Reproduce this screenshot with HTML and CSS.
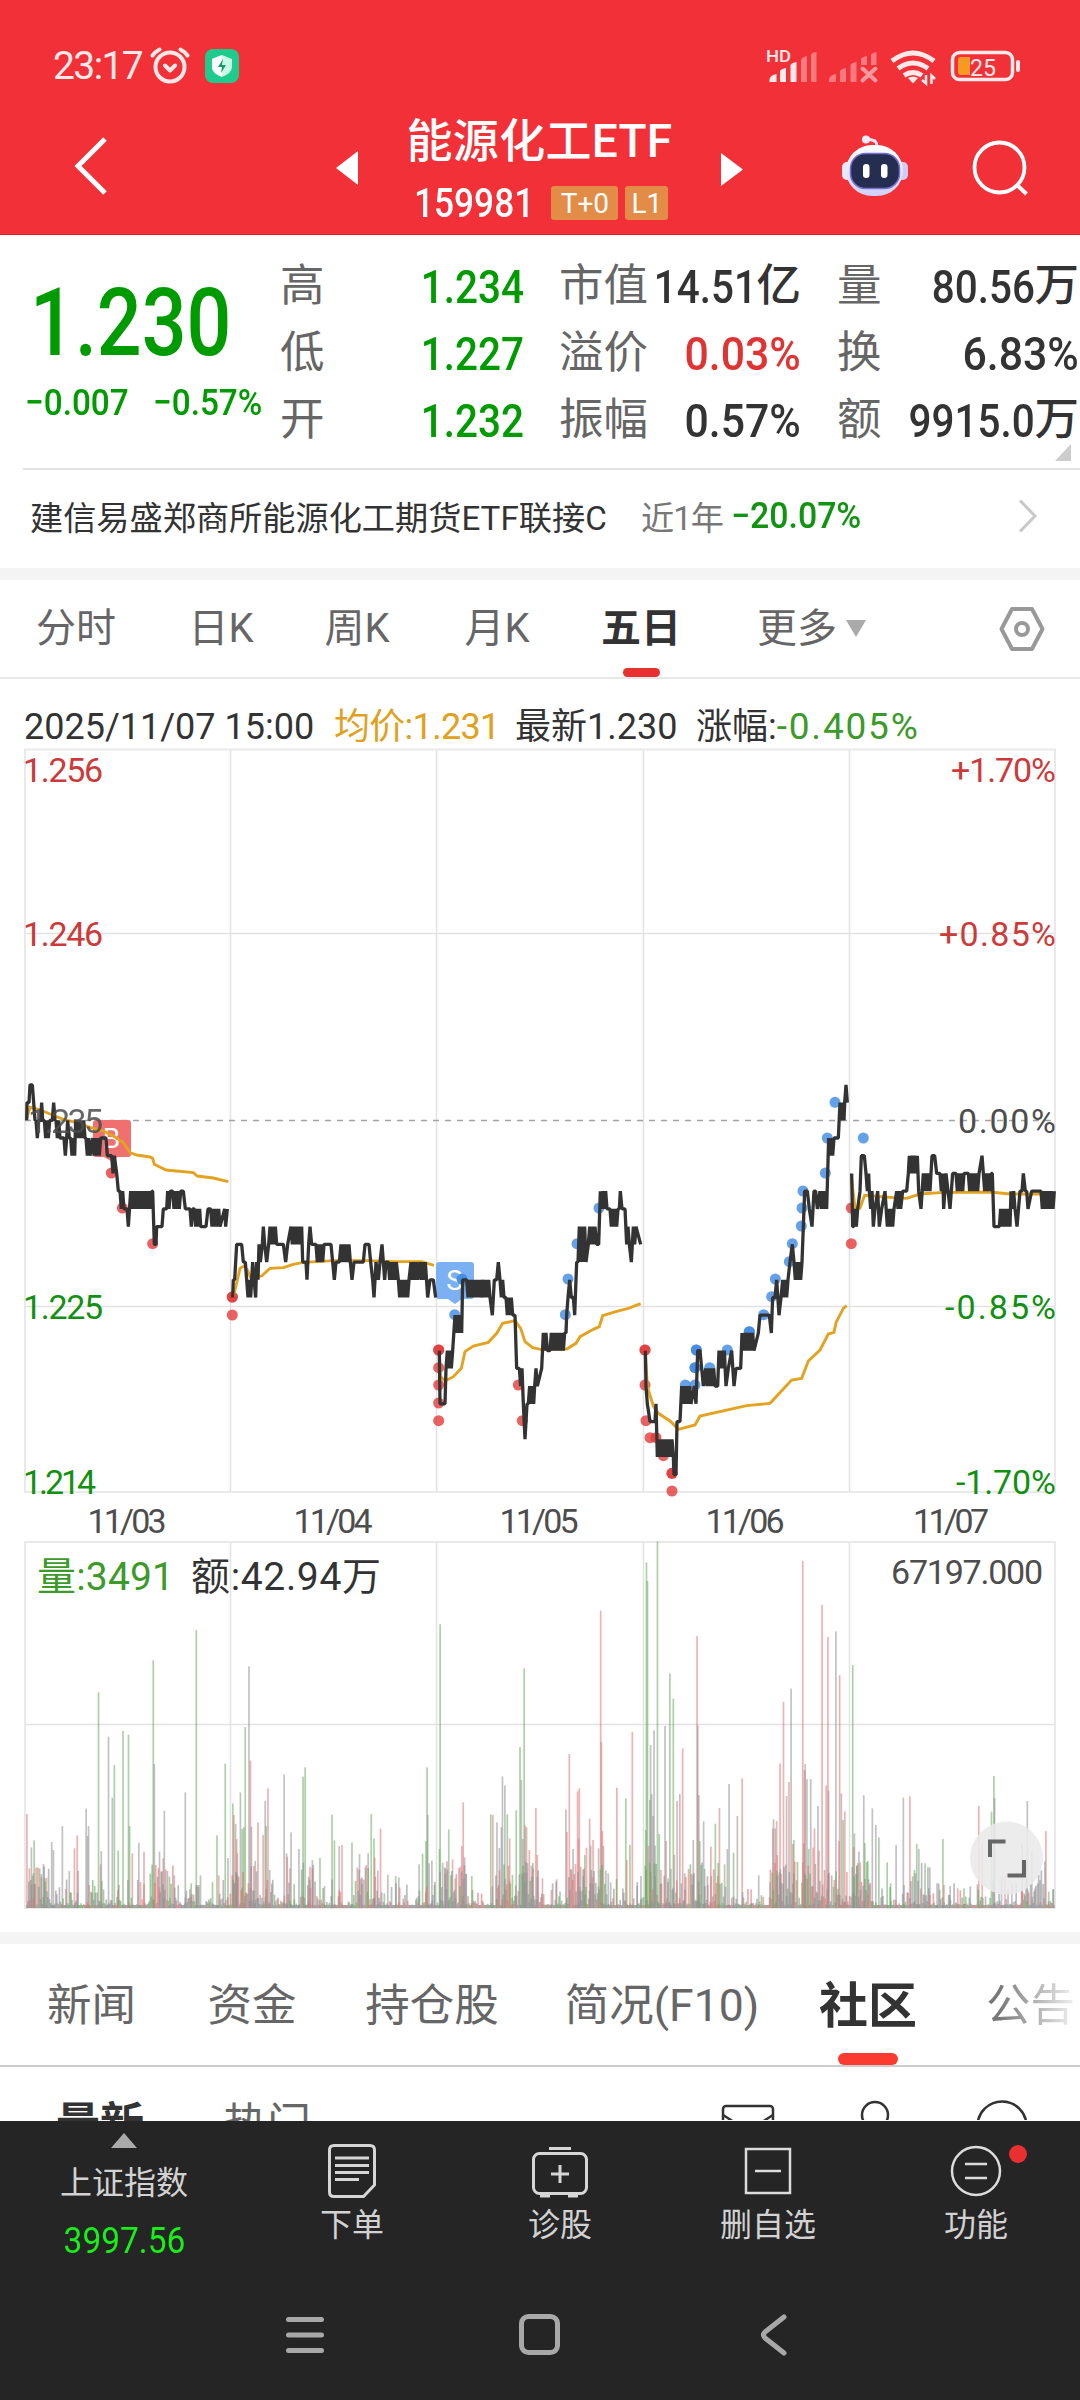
FILE: index.html
```html
<!DOCTYPE html>
<html lang="zh-CN">
<head>
<meta charset="utf-8">
<title>能源化工ETF 159981</title>
<link rel="stylesheet" href="styles.css">
</head>
<body>
<main class="phone">
  <header class="top">
    <div class="status">
      <div class="status-left">
        <span class="clock">23:17</span>
        <svg class="i-alarm" width="40" height="38" viewBox="0 0 40 38" fill="none" stroke="#ffe6e7" stroke-width="4" stroke-linecap="round" stroke-linejoin="round"><circle cx="20" cy="20" r="14.5"/><path d="M15 18.5l5 5 5-5M2.5 8.500Q5 5 9.500 2.500M37.500 8.500Q35 5 30.500 2.500"/></svg>
        <svg class="i-shield" width="34" height="34" viewBox="0 0 34 34"><rect width="34" height="34" rx="8" fill="#1dcb8c"/><path d="M17 6l10 4v8q0 6-10 10Q7 24 7 18v-8z" fill="#c9fae6"/><path d="M17 6v22Q7 24 7 18v-8z" fill="#fff"/><path d="M18 10l-5 8h4l-1 6 5-8h-4z" fill="#179a6c"/></svg>
      </div>
      <svg class="status-right" width="260" height="40" viewBox="765 46 260 40">
        <text class="hd" x="766" y="62" textLength="25" lengthAdjust="spacingAndGlyphs">HD</text>
        <g fill="#ffe9e9"><path d="M769.500 82v-3q1-4 7-5v8zM780 82V71q1-2 6-3v14zM790.500 82V65q1-2 6-3v20z"/></g>
        <g fill="#fff" opacity=".36"><path d="M801 82V60q1-3 6-4v26zM811 82V55q1-3 5.500-3v30zM829 82v-3q1-4 7-5v8zM840 82V71q1-2 6-3v14zM850.500 82V65q1-2 6-3v20zM861 65v-6q1-2 6-3v9zM871 65V55q1-2 5.500-3v13z"/></g>
        <path d="M862.500 68.500l13 12M875.500 68.500l-13 12" stroke="#fff" opacity=".5" stroke-width="4" stroke-linecap="round"/>
        <g fill="none" stroke="#ffe9e9" stroke-width="5"><path d="M892 61q21-16 42 0M898 68.500q15-11 30 0M904 75.500q9-6 18 0"/></g>
        <path d="M908 78q5-3 10 0l-5 5.500z" fill="#ffe9e9"/>
        <path d="M926 75v8.500l-4-3.500M931.500 84v-8.500l3.500 3.500" fill="none" stroke="#ffe9e9" stroke-width="2.500"/>
        <rect x="952.500" y="52.500" width="60" height="27" rx="7" fill="none" stroke="#ffe9e9" stroke-width="3.500"/>
        <path d="M1018 62v8" stroke="#ffe9e9" stroke-width="4" stroke-linecap="round"/>
        <path d="M970 57v18h-9q-3 0-3-3V60q0-3 3-3z" fill="#f59a23"/>
        <text class="bat" x="970" y="75.500" textLength="26" lengthAdjust="spacingAndGlyphs">25</text>
      </svg>
    </div>
    <div class="titlebar">
      <svg width="336" height="135" viewBox="0 100 336 135" fill="none"><path d="M105 139L78 166l27 27" stroke="#fff" stroke-width="5"/></svg>
      <svg width="22" height="135" viewBox="336 100 22 135"><path d="M336 168l22-17v34z" fill="#fff"/></svg>
      <div class="title">
        <div class="name">能源化工ETF</div>
        <div class="code-row"><span class="code din left">159981</span><span class="badge b1">T+0</span><span class="badge b2">L1</span></div>
      </div>
      <svg width="359" height="135" viewBox="721 100 359 135">
        <defs><linearGradient id="rb" x1="0" y1="0" x2="0" y2="1"><stop offset="0" stop-color="#fff"/><stop offset="1" stop-color="#cfd0f5"/></linearGradient></defs>
        <path d="M721 153v33l22-16.500z" fill="#fff"/>
        <path d="M866 139q4 0 9 2 2 2 2 6" fill="none" stroke="#e6e2f5" stroke-width="3"/><circle cx="866" cy="139.500" r="4" fill="#f0eefa"/>
        <rect x="842" y="162" width="11" height="18" rx="5" fill="#eae6f8"/><rect x="897" y="162" width="11" height="18" rx="5" fill="#cfcdf2"/>
        <rect x="846" y="145" width="57" height="51" rx="26" fill="url(#rb)"/>
        <rect x="850.500" y="153.500" width="49" height="35" rx="15" fill="#252d50" stroke="#776fd2" stroke-width="1.500"/>
        <rect x="863" y="164" width="6.500" height="14" rx="3.200" fill="#fff"/><rect x="881" y="164" width="6.500" height="14" rx="3.200" fill="#fff"/>
        <circle cx="999.500" cy="167.500" r="25" fill="none" stroke="#fff" stroke-width="3.800"/><path d="M1017 185l9.500 9" stroke="#fff" stroke-width="4"/>
      </svg>
    </div>
  </header>

  <section class="quote">
    <div class="price">
      <div class="last din left">1.230</div>
      <div class="chg"><span class="din left">−0.007</span><span class="din left">−0.57%</span></div>
    </div>
    <dl class="stats">
      <dt>高</dt><dd class="g"><b class="din">1.234</b></dd><dt class="m">市值</dt><dd><b class="din">14.51</b>亿</dd><dt class="r">量</dt><dd><b class="din">80.56</b>万</dd>
      <dt>低</dt><dd class="g"><b class="din">1.227</b></dd><dt class="m">溢价</dt><dd class="red"><b class="din wide">0.03%</b></dd><dt class="r">换</dt><dd><b class="din wide">6.83%</b></dd>
      <dt>开</dt><dd class="g"><b class="din">1.232</b></dd><dt class="m">振幅</dt><dd><b class="din wide">0.57%</b></dd><dt class="r">额</dt><dd><b class="din">9915.0</b>万</dd>
    </dl>
    <i class="corner"></i>
  </section>

  <section class="fund">
    <span class="fund-name">建信易盛郑商所能源化工期货ETF联接C</span>
    <span class="period">近1年</span>
    <span class="ret din left">−20.07%</span>
    <svg class="chev" width="20" height="34" viewBox="0 0 20 34" fill="none" stroke="#c8c8c8" stroke-width="3"><path d="M2 1.500l15 15.500L2 32.500"/></svg>
  </section>

  <nav class="periods">
    <span>分时</span><span>日K</span><span>周K</span><span>月K</span><span class="on">五日</span><span class="more">更多<i></i></span>
    <svg width="48" height="46" viewBox="0 0 48 46" fill="none" stroke="#999" stroke-width="4"><path d="M14 3h20l10.500 20L34 43H14L3.500 23z" stroke-linejoin="round"/><circle cx="24" cy="23" r="6"/></svg>
  </nav>

  <section class="info"><span class="t1">2025/11/07 15:00</span><span class="avg">均价:1.231</span><span class="now">最新1.230</span><span class="pct">涨幅:<b>-0.405%</b></span></section>

  <svg class="chart" width="1080" height="1187" viewBox="0 745 1080 1187">
    <g fill="none" stroke="#e2e2e2" stroke-width="1.500">
      <path d="M230.500 749V1492M436.500 749V1492M643.500 749V1492M849.500 749V1492M25 933.500H1055M25 1306.500H1055"/>
      <path d="M230.500 1542V1908M436.500 1542V1908M643.500 1542V1908M849.500 1542V1908M25 1724.500H1055"/>
      <path d="M25 749.500H1055V1492H25zM25 1542H1055V1908H25z" stroke="#e9e9e9" stroke-width="2"/>
    </g>
    <path d="M25 1120.500H1055" stroke="#a2a2a2" stroke-width="1.500" stroke-dasharray="6 6"/>
    <g id="volume"></g>
    <g id="marks"></g>
    <path d="M96 1120h32q3 0 3 3v31q0 3-3 3h-10l-7 4-7-4h-8q-3 0-3-3v-31q0-3 3-3z" fill="#f07070"/>
    <text class="flag" x="111.500" y="1148" text-anchor="middle">B</text>
    <path d="M439 1262h32q3 0 3 3v31q0 3-3 3h-9l-7 5-7-5h-9q-3 0-3-3v-31q0-3 3-3z" fill="#7bb0f3"/>
    <text class="flag" x="454.500" y="1290" text-anchor="middle">S</text>
    <circle cx="462" cy="1279" r="5.500" fill="#468de4"/>
    <g id="price" fill="none"></g>
    <g class="axis">
      <g class="up"><text x="23" y="782" textLength="80">1.256</text><text x="23" y="946" textLength="80">1.246</text></g>
      <g class="dn"><text x="23" y="1319" textLength="80">1.225</text><text x="23" y="1494" textLength="73">1.214</text></g>
      <text class="mid" x="28" y="1133" textLength="75" opacity=".85">1.235</text>
      <g text-anchor="end">
        <g class="up"><text x="1056" y="782" textLength="105">+1.70%</text><text x="1056" y="946" textLength="117">+0.85%</text></g>
        <text class="mid" x="1056" y="1133" textLength="98">0.00%</text>
        <g class="dn"><text x="1056" y="1319" textLength="111">-0.85%</text><text x="1056" y="1494" textLength="100">-1.70%</text></g>
        <text class="mid" x="1043" y="1584" textLength="152">67197.000</text>
      </g>
      <g class="mid" text-anchor="middle"><text x="127" y="1533" textLength="79">11/03</text><text x="333" y="1533" textLength="79">11/04</text><text x="539" y="1533" textLength="79">11/05</text><text x="745" y="1533" textLength="79">11/06</text><text x="951" y="1533" textLength="76">11/07</text></g>
      <text class="vol" x="37" y="1590" textLength="137">量:3491</text>
      <text class="amt" x="191" y="1590" textLength="190">额:42.94万</text>
    </g>
    <circle cx="1006.500" cy="1858" r="36.500" fill="#e9e9e9" opacity=".88"/>
    <path d="M990 1857v-15.500h15.500M1007.500 1875.500H1024V1860" fill="none" stroke="#666" stroke-width="4"/>
  </svg>

  <nav class="sections">
    <span>新闻</span><span>资金</span><span>持仓股</span><span>简况(F10)</span><span class="on">社区</span><span class="fade">公告</span>
  </nav>
  <section class="posts">
    <b>最新</b><span>热门</span>
    <svg width="310" height="53" viewBox="720 2068 310 53" fill="none" stroke="#333" stroke-width="2.500"><rect x="723" y="2107" width="50" height="38" rx="3"/><path d="M723 2116l25 16 25-16"/><circle cx="875" cy="2116" r="13"/><circle cx="1002" cy="2127" r="24.500"/></svg>
  </section>

  <nav class="dock">
    <div class="index"><i></i><span>上证指数</span><b class="din">3997.56</b></div>
    <div class="item"><svg width="60" height="60" viewBox="322 2140 60 60" fill="none" stroke="#d6d6d6" stroke-width="3"><path d="M334 2145.500h36q4.500 0 4.500 4.500v35l-11 11.500H334q-4.500 0-4.500-4.500v-42q0-4.500 4.500-4.500zM335 2158h34M335 2165.500h34M335 2172.500h34M335 2179.500h24"/></svg><span>下单</span></div>
    <div class="item"><svg width="60" height="60" viewBox="530 2140 60 60" fill="none" stroke="#d6d6d6" stroke-width="3"><rect x="533.500" y="2153.500" width="53" height="40" rx="6"/><path d="M549 2148.500h22M551 2174h18M560 2165v18M540 2196h10M568 2196h10"/></svg><span>诊股</span></div>
    <div class="item"><svg width="60" height="60" viewBox="738 2140 60 60" fill="none" stroke="#dcdcdc" stroke-width="2.500"><path d="M746 2149h44v44h-44zM755 2171h26"/></svg><span>删自选</span></div>
    <div class="item"><svg width="110" height="60" viewBox="921 2140 110 60" fill="none" stroke="#dcdcdc" stroke-width="2.500"><circle cx="976" cy="2171" r="24"/><path d="M965 2164h22M965 2178h22"/><circle cx="1018" cy="2154" r="9" fill="#e93030" stroke="none"/></svg><span>功能</span></div>
  </nav>
  <footer class="sys">
    <svg width="1080" height="130" viewBox="0 2270 1080 130" fill="none" stroke="#a8a8a8" stroke-width="5" stroke-linecap="round" stroke-linejoin="round"><path d="M288.500 2319.500h33M288.500 2335h33M288.500 2350.500h33M784 2317l-19 15q-3 3 0 6l19 15"/><rect x="521.500" y="2316.500" width="36" height="36" rx="7"/></svg>
  </footer>
</main>
<script src="chart.js"></script>
</body>
</html>
```
FILE: styles.css
```css
* { box-sizing: border-box; }
body { margin: 0; background: #fff; font-family: Roboto, "Noto Sans CJK SC", sans-serif; color: #333; }
i { font-style: normal; }
svg { display: block; flex: none; }
.phone { width: 1080px; height: 2400px; overflow: hidden; display: flex; flex-direction: column; }
.phone > * { flex: none; }
.din { display: inline-block; font-weight: 500; transform: scaleX(.86); transform-origin: right center; }
.din.left { transform-origin: left center; }
.din.wide { transform: scaleX(.91); }
.g { color: #009b00; }
.red { color: #e03434; }

.top { height: 235px; background: #f23038; color: #fff; border-bottom: 1px solid #d8242e; }
.status { height: 100px; padding: 46px 55px 0 53px; display: flex; justify-content: space-between; align-items: flex-start; }
.status-left { display: flex; align-items: center; height: 40px; color: #ffe9e9; }
.clock { font-size: 39px; letter-spacing: -1.600px; width: 97px; }
.i-shield { margin-left: 15px; }
.hd { font: 500 17px Roboto; fill: #ffe9e9; }
.bat { font: 400 24px Roboto; fill: #ffe9e9; }
.titlebar { height: 135px; display: flex; }
.title { width: 363px; display: flex; flex-direction: column; align-items: center; }
.name { font-size: 46px; line-height: 60px; font-weight: 500; margin-top: 11px; white-space: nowrap; letter-spacing: .3px; }
.code-row { display: flex; align-items: center; height: 36px; margin-top: 14px; padding-left: 3px; }
.code { font-size: 41px; line-height: 36px; margin-right: -2px; }
.badge { background: #e28c48; border-radius: 3px; height: 34px; line-height: 36px; font-size: 28px; text-align: center; }
.b1 { width: 67px; }
.b2 { width: 43px; margin-left: 7px; }

.quote { height: 235px; display: flex; position: relative; }
.quote::after { content: ""; position: absolute; left: 23px; right: 0; bottom: 0; height: 2px; background: #e2e2e2; }
.price { width: 280px; color: #009b00; padding: 38px 0 0 30px; }
.last.din { font-size: 94px; line-height: 100px; display: block; transform: scaleX(.84); }
.chg { display: flex; margin: 8px 0 0 -5px; font-size: 37px; line-height: 44px; }
.chg span { width: 129px; white-space: nowrap; transform: scaleX(.9); }
.stats { margin: 18px 0 0; display: grid; grid-template-columns: 60px 184px 127px 150px 118px 160px; grid-auto-rows: 67px; font-size: 44.500px; line-height: 67px; }
.stats dt { color: #666; white-space: nowrap; }
.stats .m { padding-left: 35px; }
.stats .r { padding-left: 36px; }
.stats dd { margin: 0; display: flex; justify-content: flex-end; white-space: nowrap; font-weight: 500; }
.stats dd b { font-size: 47px; }
.corner { position: absolute; right: 9px; bottom: 9px; border-left: 16px solid transparent; border-bottom: 17px solid #ccc; }

.fund { height: 110px; border-bottom: 12px solid #f4f4f4; padding: 0 42px 7px 30px; display: flex; align-items: center; font-size: 33.200px; white-space: nowrap; }
.fund-name { width: 611px; }
.period { width: 90px; color: #777; letter-spacing: -1px; }
.ret.din { color: #119411; font-size: 36px; transform: scaleX(.94); }
.chev { margin-left: auto; }

.periods { height: 99px; display: grid; grid-template-columns: 152px 138px 134px 146px 142px 158px 1fr; align-items: center; text-align: center; font-size: 40px; color: #666; border-bottom: 2px solid #e8e8e8; }
.periods span { height: 97px; line-height: 98px; white-space: nowrap; }
.periods svg { justify-self: end; margin-right: 34px; }
.periods .on { color: #333; font-weight: 700; display: flex; flex-direction: column; align-items: center; }
.periods .on::after { content: ""; width: 37px; height: 9px; border-radius: 5px; background: #e93030; flex: none; margin-top: -10px; }
.periods .more { display: flex; padding-left: 45px; align-items: center; gap: 9px; }
.more i { border: 10px solid transparent; border-top: 17px solid #aaa; border-bottom: 0; }

.info { height: 66px; padding-left: 24px; display: flex; font-size: 36px; line-height: 96px; white-space: nowrap; }
.t1 { width: 310px; }
.avg { width: 181px; color: #e0a020; letter-spacing: -.700px; }
.now { width: 181px; }
.info b { font-weight: 400; color: #3c9a28; font-size: 37px; letter-spacing: 1.800px; }

.flag { font: 28px Roboto; fill: #fff; }
.axis { font-family: Roboto, "Noto Sans CJK SC", sans-serif; font-size: 34px; }
.up { fill: #cc3a3a; }
.dn { fill: #119011; }
.mid { fill: #4d4d4d; }
.vol { font-size: 39px; fill: #3c9a28; }
.amt { font-size: 39px; fill: #333; }

.sections { height: 135px; border-top: 12px solid #f4f4f4; border-bottom: 2px solid #ccc; display: grid; grid-template-columns: 171px 150px 210px 250px 164px 135px; text-align: center; font-size: 44.500px; line-height: 125px; color: #666; white-space: nowrap; padding-left: 6px; }
.sections span { height: 121px; }
.sections .on { color: #333; font-weight: 700; font-size: 49px; display: flex; flex-direction: column; align-items: center; padding-right: 2px; }
.sections .on::after { content: ""; width: 60px; height: 12px; border-radius: 6px; background: #fb3b30; margin-top: -16px; flex: none; }
.fade { text-align: left; padding-left: 35px; color: transparent; background: linear-gradient(90deg, #777 35%, #fff 98%); -webkit-background-clip: text; background-clip: text; overflow: hidden; }
.posts { height: 54px; overflow: hidden; display: flex; align-items: flex-start; font-size: 44px; line-height: 60px; padding: 27px 50px 0 56px; color: #666; }
.posts b { color: #333; width: 167px; }
.posts span { line-height: 62px; }
.posts svg { margin: -27px 0 0 auto; }

.dock { height: 149px; background: #252525; color: #d2d2d2; display: grid; grid-template-columns: 248px 208px 208px 208px 208px; font-size: 32px; }
.index { display: flex; flex-direction: column; align-items: center; line-height: 44px; }
.index i { margin-top: 12px; border: 13px solid transparent; border-bottom: 15px solid #aaa; border-top: 0; }
.index span { margin-top: 13px; }
.index b.din { margin-top: 14px; font-size: 36px; font-weight: 400; color: #19ee19; transform-origin: center; transform: scaleX(.93); }
.item { display: flex; flex-direction: column; align-items: center; padding-top: 19px; line-height: 50px; }
.sys { height: 130px; background: #252525; }
```
FILE: chart.js
```js
const NS = 'http://www.w3.org/2000/svg';
const add = (parent, tag, attrs) => {
  const el = document.createElementNS(NS, tag);
  for (const k in attrs) el.setAttribute(k, attrs[k]);
  document.getElementById(parent).appendChild(el);
};
// One tick of price is one level; level 0 is the previous close.
const level = k => 1120.3 + 17.72 * k;

// "x:k" is a point, "x-x:a/b" is a run that alternates between two levels.
const days = [
  [0, '80:0 81:-1 87:-1 90:-2 97:-2 101:-1 105:0 108-118:0/1 122:0 125:-1 128:0 133-150:0/1 157:0 161:-1 165:0 168-180:0/1 188:1 192-200:1/2 203:0 208:1 212-224:1/2 227-256:0/1 258-270:1/2 278-305:1/2 308:1 318:1 322:2 335-345:2/3 350:3 355:4 360-372:4/5 378:5 381-388:5/6 392-456:4/5 458:4 463:7 468:7 470:6 486:6 490:5 500:5 503-512:4/5 518-545:4/5 550:4 556:5 568:5 570-578:5/6 583-600:5/6 602:6 618:6 624:5 632-660:5/6 674:5 677:6 682:5'],
  [0, '698:10 700:9 704:9 710:7 725:7 730:8 736:8 740-752:9/10 758-764:8/9 767:10 770-776:8/9 777-784:7/8 787:7 790:6 794:7 800:8 806:7 810-830:6/7 835:7 850:7 857:8 863:7 873-906:6/7 908:8 918:8 921:9 926:7 930:6 935:7 948-968:7/8 972:7 993:7 998:8 1003:9 1008:8 1018:8 1023-1053:7/8 1056:9 1062:8 1090:8 1095:7 1107:7 1112:8 1118:9 1122:10 1128:8 1135:9 1140:8 1146:7 1150-1158:8/9 1165-1190:8/9 1195-1228:9/10 1233-1253:8/9 1260-1278:8/9 1283:10 1290:9 1300:9 1307:10'],
  [400, '118:13 120:16 135:16 138-158:14/13 165-186:11/12 188:9 195:9 200-247:9/10 250-272:9/10 277:11 283:9 290:9 295:8 300-313:9/10 318-338:10/11 345:11 350:14 358-366:14/15 370:16 375:18 381:16 385-403:16/15 404-414:15/14 425:14 430-442:12/13 450-495:13/12 498:12 500:11 504:10 509:9 514:10 520:10 524:11 530:8 534-560:8/6 565-587:7/6 590:7 596:7 601-624:4/5 630-655:5/6 658:5 661:4 666:5 675:5 680-690:7/6 694:8 700-710:6/7 722:7'],
  [400, '736:13 738:15 742:16 750:17 765:17 768:16 772-820:19/18 822:20 828:20 831:17 840:17 845-875:15/16 883:15 888:16 893:13 900:13 905:14 910:15 917-948:14/15 953:15 957-975:13/14 978:15 985:14 995:13 1002:15 1008:14 1022:14 1026-1065:12/13 1075:12 1080:11 1108:11 1114:12 1118:10 1125:10 1130:9 1137:11 1143:10 1148-1166:9/10 1170:8 1177:7 1182-1202:8/9 1206:8 1210:6 1214:4 1222:4 1228:5 1236:6 1242:4 1247:4 1252:5 1260-1280:4/5 1283:3 1286-1303:1/2 1308:1 1315:1 1320-1332:-1/0 1334-1345:-1/-2'],
  [640, '635:3 638:6 641-654:6/5 660:4 664:2 673:2 678-686:3/4 688-696:4/5 700:6 705:5 713:4 718:6 725:5 735:4 742-765:6/5 770-785:4/5 788:4 800:4 805:3 808-832:2/3 836:4 843:5 850-873:3/4 876:2 884:2 890:3 900-908:3/4 911:5 918:3 924:4 930:5 938:3 948-975:3/4 985-1020:3/4 1026:2 1030-1055:3/4 1057:3 1062:6 1075:6 1078-1110:6/5 1113-1127:4/5 1131:6 1140:4 1146:4 1150:3 1156:4 1160-1167:4/5 1175:4 1200:4 1203-1245:4/5']
];
const averages = [
  [0, 1050, '80,206 90,172 120,180 150,192 190,208 230,218 270,232 310,243 340,258 370,278 390,308 410,315 450,321 458,325 463,343 498,360 580,368 592,378 640,384 685,395'],
  [0, 1050, '700,740 712,690 720,655 732,648 742,660 752,683 785,678 810,655 850,653 880,643 910,637 1000,632 1100,632 1180,635 1265,635 1302,646'],
  [400, 1150, '118,604 121,680 135,693 160,680 184,655 195,605 220,588 265,577 290,550 308,520 345,512 362,535 375,575 398,593 425,599 500,597 528,580 540,560 580,538 598,530 608,497 650,484 685,475 722,461'],
  [400, 1150, '736,604 742,710 760,768 775,790 810,813 835,838 885,825 900,798 1040,767 1110,760 1175,690 1205,685 1225,633 1260,600 1285,552 1302,547 1308,518 1330,475 1340,467'],
  [640, 1050, '635,390 645,474 660,474 674,436 750,442 800,445 840,432 900,428 1050,426 1110,432 1245,432']
];
averages.forEach(([ox, oy, s]) => add('price', 'polyline', {
  points: s.split(' ').map(p => { const [x, y] = p.split(','); return `${ox + x / 3},${oy + y / 3}`; }).join(' '),
  stroke: '#e3a321', 'stroke-width': 2.9
}));
days.forEach(([ox, s]) => {
  const pts = [];
  s.split(' ').forEach(token => {
    const [range, k] = token.split(':');
    if (!range.includes('-')) return pts.push([ox + range / 3, level(+k)]);
    const [a, b] = range.split('-').map(Number), ks = k.split('/').map(Number);
    for (let x = a, i = 0; x <= b; x += 4, i++) pts.push([ox + x / 3, level(ks[i % 2])]);
  });
  add('price', 'polyline', { points: pts.map(p => p.join()).join(' '), stroke: '#333', 'stroke-width': 3.3, 'stroke-linejoin': 'bevel' });
});

const marks = [
  ['#e53a3a', 0, 1050, '334,369 367,474 458,581 697,741 697,741 697,795'],
  ['#e53a3a', 400, 1150, '116,600 116,600 116,653 116,705 116,759 116,812 355,705 367,812 735,600 735,600 735,705 738,812 750,863 768,863 790,917 816,970 816,970 816,1023'],
  ['#e53a3a', 640, 1050, '634,474 634,581'],
  ['#3f8ae4', 400, 1150, '164,494 496,494 504,387 531,281 597,174 856,705 885,705 885,653 885,653 889,600 889,600 929,653 982,600 1048,545 1048,545 1091,494 1115,440 1126,387 1168,335 1177,281 1204,228 1206,174 1209,123 1276,69'],
  ['#3f8ae4', 640, 1050, '562,264 585,157 670,264']
];
marks.forEach(([fill, ox, oy, s]) => s.split(' ').forEach(p => {
  const [x, y] = p.split(',');
  add('marks', 'circle', { cx: ox + x / 3, cy: oy + y / 3, r: 5.5, fill, opacity: .8 });
}));

// Volume bars: x, top edge and direction (g down, r up, n unchanged).
const spikes = [
  [0, '78,1002r 91,1102n 99,1081g 85,1165r 97,1180g 126,1152n 120,1192r 135,1193r 130,1195g 150,1086n 155,1110n 181,1038n 191,1227r 201,1173n 216,1105r 224,1066r 227,1173n 250,986n 254,1068n 257,1038n 259,1215r 275,1218g 286,637g 292,1153r 294,1113n 315,770n 326,953n 332,855g 343,1112g 357,753g 373,764g 376,1038g 384,1120r 403,1088n 408,1206r 418,1115r 445,541g 448,852n 463,1115n 474,1135r 477,992n 492,1190g 506,1186n 538,937n 555,1210g 570,450g 572,1215r 582,1186n 617,1206g 630,1066g 635,1186r 654,851g 662,1134n 676,970g 679,1005r 684,1031n 687,1077r 689,1120r 698,937n 703,1047g 708,1042g 712,741g 723,559n 727,842r 730,1040n 737,1158r 741,1143n 749,1027r 764,1065r 770,963n 773,1038g 778,925r 783,1170n 825,883n 832,1120n 834,1130r 842,1165r 845,1057n 854,1212g 868,1107n 880,890g 886,862g 896,1190n 900,1160r 907,1140n 929,1133g 942,1218n 964,1004g 971,1081g 985,1098n 993,1095r 1022,1088g 1044,1122n 1051,1192n 1069,1120n 1078,1002g 1086,1075g 1088,1133r 1097,1172n 1105,1046r 1116,1240g 1126,1184n 1149,1188g 1158,1192n 1217,1153n 1227,1121g 1237,1083g 1240,862g 1242,1005n 1246,1150n 1254,1142n 1262,1215g 1278,433g 1276,1107g 1285,1148n 1293,1180r 1298,1144r 1303,1048g 1314,1138r 1322,1195r 1337,1160r 1341,1098r 1345,967r 1349,1132n 1353,1182n 1370,1188g 1425,1003g 1431,1005r 1443,1027n 1450,1104n 1456,1041n 1459,889n 1466,916n 1473,1003g 1480,1075r 1488,1185g 1499,991g 1510,801g 1514,900n 1518,1077n 1522,565g 1525,1036r 1529,1042n 1537,1110r 1543,1157n 1548,1165r 1556,984r 1560,1125r'],
  [540, '7,1195r 33,1230r 48,1198r 58,1234g 75,988n 78,1056r 85,822r 96,1107n 103,1152r 109,934r 112,1075r 114,925r 118,1160n 125,1168r 130,1125g 135,1103r 144,1016r 147,1097n 154,1080r 170,1105n 176,392r 178,786r 181,1053r 184,1098n 191,1172n 198,1180n 205,1207n 223,923r 249,955g 252,1140r 261,1095g 268,756r 282,1218n 293,1188n 307,1050g 309,247g 312,303g 315,1098r 319,960n 321,795n 324,942n 328,1008n 331,751n 334,1097n 341,184g 346,1062g 351,1170r 363,738n 366,1083r 372,1195n 377,580g 380,1167n 387,656g 390,1125n 398,963r 406,942n 414,805r 420,1180n 445,1080n 456,468r 458,737n 461,945n 464,1083g 475,1024n 478,1167n 487,1215r 496,1100r 509,1031g 516,1188r 521,984r 536,1153g 544,1107n 549,912n 562,1118g 573,1008n 587,895r 613,1228r 635,1186n 668,1207n 676,1046r 678,1018n 683,1045n 687,1023r 689,1125r 697,850r 700,1182r 707,665r 716,948n 723,906r 729,626n 734,1092r 737,1080g 763,243r 766,1090r 768,871r 770,852n 775,897n 780,1107g 786,897n 793,1103r 797,1045r 807,978n 810,1112r 819,375r 831,916r 836,471r 838,933n 859,454n 868,1083r 870,586r 875,940n 880,1020g 885,994r 891,1176r 908,555g 911,1102r 913,1060n 920,1157r 926,1115n 930,1147r 940,946n 943,1089g 952,1143g 965,985n 975,1035n 984,1072g 1008,1147g 1018,1210g 1034,1095n 1055,953n 1057,1215n 1074,949r 1087,1170g 1094,1092g 1100,1107n 1118,1150g 1132,1162n 1153,1210n 1170,1077g 1173,1215r 1191,1218n 1213,1225r 1231,1225g 1274,978r 1284,1090r 1311,995g 1318,888g 1320,954n 1340,1190n 1350,1188r 1370,1210n 1400,1095n 1415,963n 1428,1113n 1452,1200n 1469,1053r 1477,1235g 1491,1228g']
];
const tones = { g: '#69aa60', r: '#df7474', n: '#8f8f92' };
const bar = (x, h, c, o) => add('volume', 'rect', { x: x - .8, y: 1908 - h, width: 1.7, height: h, fill: tones[c], opacity: o });
spikes.forEach(([ox, s]) => s.split(' ').forEach(t => {
  const [x, rest] = t.split(',');
  bar(ox + x / 2.904, (1284 - parseInt(rest)) / 3, rest.slice(-1), .55);
}));
let seed = 7;
const rnd = () => (seed = seed * 16807 % 2147483647) / 2147483647;
const busy = [[26, 50], [150, 175], [232, 268], [300, 314], [355, 380], [440, 468], [495, 545], [568, 608], [645, 720], [770, 846], [851, 872], [912, 930], [1020, 1052]];
for (let x = 27; x < 1054; x += .9) {
  const b = busy.some(([p, q]) => x > p && x < q);
  const h = 3 + Math.pow(rnd(), b ? 2 : 6) * (b ? 44 : 26);
  bar(x, h, 'nnnnrg'[Math.floor(rnd() * 6)], .6);
}
```
